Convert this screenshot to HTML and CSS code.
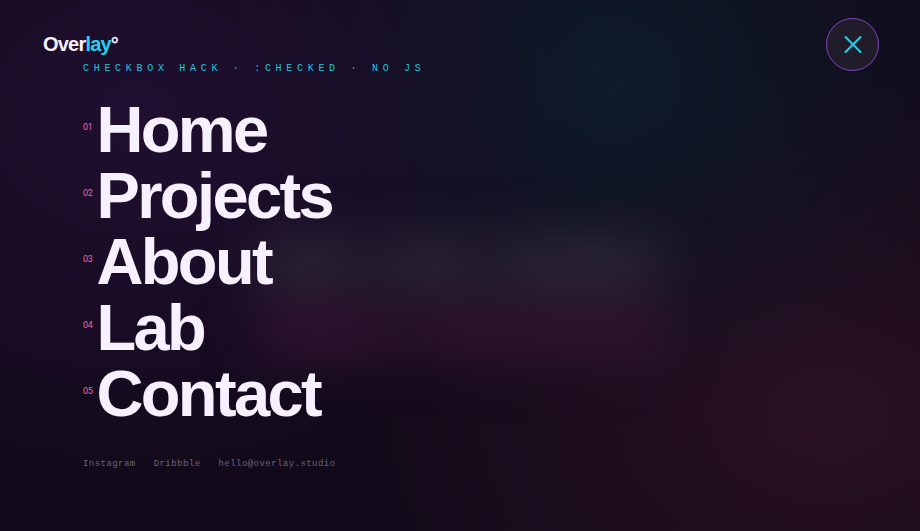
FILE: index.html
```html
<!DOCTYPE html>
<html lang="en">
<head>
<meta charset="utf-8">
<meta name="viewport" content="width=device-width, initial-scale=1">
<title>Overlay</title>
<link rel="stylesheet" href="styles.css">
</head>
<body>
<input class="menu-state" type="checkbox" id="menu" checked>
<div class="glow" aria-hidden="true">
  <div class="glow-row pale"><i class="w3"></i><i class="w3"></i><i class="w5"></i></div>
  <div class="glow-row pink"><i class="w3"></i><i class="w5"></i></div>
</div>
<header class="bar">
  <a class="logo" href="#">Over<span>lay</span><b>°</b></a>
  <label class="close" for="menu" aria-label="Toggle menu">
    <svg viewBox="0 0 20 20" aria-hidden="true"><path d="M2.5 2 17.5 17M17.5 2 2.5 17"/></svg>
  </label>
</header>
<nav class="menu">
  <p class="eyebrow">Checkbox Hack · :checked · No JS</p>
  <ul class="links">
    <li><a href="#"><small>01</small>Home</a></li>
    <li><a href="#"><small>02</small>Projects</a></li>
    <li><a href="#"><small>03</small>About</a></li>
    <li><a href="#"><small>04</small>Lab</a></li>
    <li><a href="#"><small>05</small>Contact</a></li>
  </ul>
  <div class="social">
    <a href="#">Instagram</a>
    <a href="#">Dribbble</a>
    <a href="#">hello@overlay.studio</a>
  </div>
</nav>
</body>
</html>
```
FILE: styles.css
```css
* { box-sizing: border-box; }
body {
  margin: 0;
  min-height: 100vh;
  position: relative;
  overflow-x: hidden;
  color: #f7f0ff;
  font-family: "Liberation Sans", Arial, sans-serif;
  background:
    radial-gradient(ellipse 50% 70% at 15% 22%, #200f30, transparent),
    radial-gradient(ellipse 42% 60% at 66% 15%, #0d1b29, transparent),
    radial-gradient(ellipse 50% 65% at 90% 78%, #2a1024, transparent),
    #120a1a;
}
a { color: inherit; text-decoration: none; }
.menu-state { position: absolute; opacity: 0; }
.menu-state:not(:checked) ~ .menu { display: none; }

.glow {
  position: absolute;
  inset: 0;
  display: flex;
  flex-direction: column;
  justify-content: center;
  align-items: center;
  gap: 20px;
  padding-top: 64px;
  filter: blur(26px);
}
.glow-row { display: flex; gap: 16px; width: 44%; height: 48px; }
.glow-row i { border-radius: 8px; }
.w3 { flex: 3; }
.w5 { flex: 5; }
.pale i { background: #2e2838; }
.pink i { background: #341330; }

.bar {
  position: relative;
  display: flex;
  justify-content: space-between;
  align-items: center;
  padding: 18px 41px 0 43px;
}
.logo { font-size: 20px; font-weight: 700; letter-spacing: -0.04em; }
.logo span { color: #22d3ee; }
.close {
  display: grid;
  place-items: center;
  width: 53px;
  height: 53px;
  border: 1px solid #8244c4;
  border-radius: 50%;
  background: #201c2a;
  cursor: pointer;
}
.close svg {
  width: 20px;
  fill: none;
  stroke: #22d3ee;
  stroke-width: 2;
  stroke-linecap: round;
}
.menu { position: relative; padding: 0 83px 56px; margin-top: -8px; }
.eyebrow {
  margin: 0 0 22px;
  font: 400 10px/12px "Liberation Mono", monospace;
  letter-spacing: 0.47em;
  text-transform: uppercase;
  color: #22c4de;
}
.links { margin: 0; padding: 0; list-style: none; }
.links a {
  display: flex;
  gap: 4px;
  font-size: 65px;
  line-height: 66px;
  font-weight: 700;
  letter-spacing: -0.04em;
}
.links small {
  font: 400 9px/60px Roboto, sans-serif;
  letter-spacing: -0.04em;
  color: #ec64a8;
}
.social {
  display: flex;
  gap: 18px;
  margin-top: 31px;
  font: 9px/12px "Liberation Mono", monospace;
  letter-spacing: 0.05em;
  color: #6a6372;
}
```
